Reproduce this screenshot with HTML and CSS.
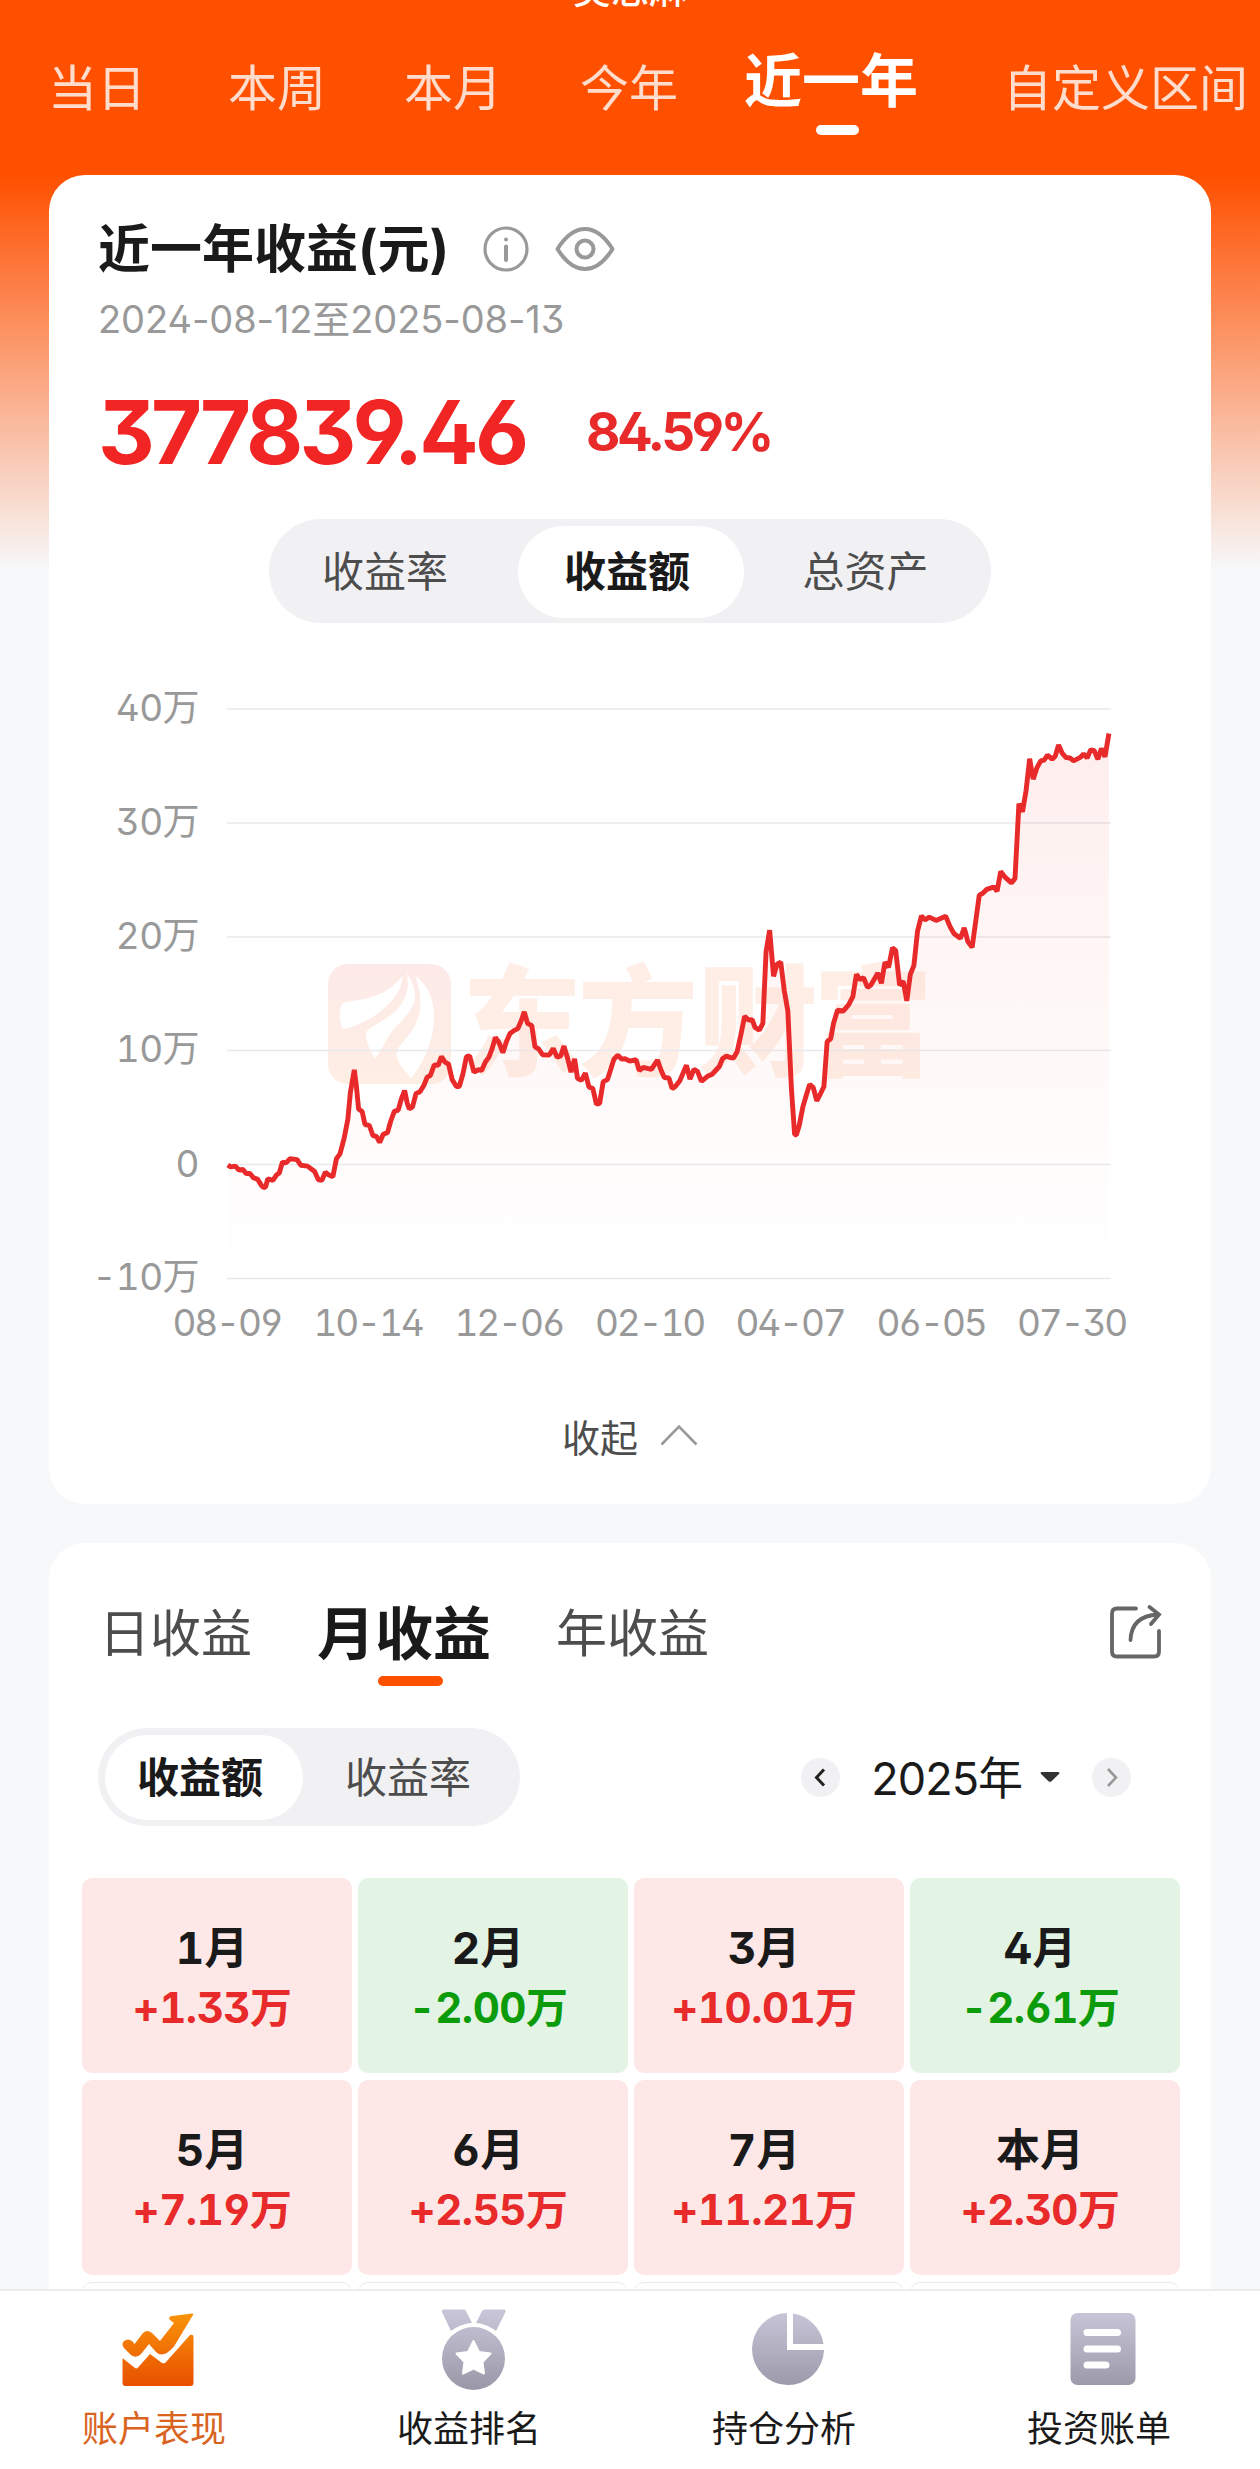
FILE: index.html
```html
<!DOCTYPE html>
<html lang="zh-CN">

<head>
    <meta charset="UTF-8">
    <meta name="viewport" content="width=device-width, initial-scale=1.0">
    <title>账户表现</title>
    <link rel="stylesheet" href="styles.css">
</head>

<body>

    <div class="content">
        <div class="account-name">吴思麻</div>

        <div class="range-tabs">
            <span>当日</span>
            <span>本周</span>
            <span>本月</span>
            <span>今年</span>
            <span class="active">近一年</span>
            <span>自定义区间</span>
        </div>

        <div class="card profit-card">
            <div class="card-title">
                <h1>近一年收益(元)</h1>
                <svg class="icon-info" width="46" height="46" viewBox="0 0 46 46" fill="none" stroke="#999">
                    <circle cx="23" cy="23" r="21" stroke-width="3.2"/>
                    <path d="M23 20.5V34" stroke-width="4" stroke-linecap="round"/>
                    <circle cx="23" cy="13.5" r="2" fill="#999" stroke="none"/>
                </svg>
                <svg class="icon-eye" width="60" height="46" viewBox="0 0 60 46" fill="none" stroke="#999" stroke-width="4">
                    <path d="M2.500 23C10 11 19 3 30 3S50 11 57.500 23C50 35 41 43 30 43S10 35 2.500 23Z" stroke-linejoin="round"/>
                    <circle cx="30" cy="23" r="8.500"/>
                </svg>
            </div>
            <div class="date-range">2024-08-12至2025-08-13</div>
            <div class="total">
                <span class="amount">377839.46</span>
                <span class="percent">84.59%</span>
            </div>

            <div class="segment segment-large">
                <span>收益率</span>
                <span class="active">收益额</span>
                <span>总资产</span>
            </div>

            <svg class="chart" width="1162" height="670" viewBox="49 680 1162 670">
                <defs>
                    <linearGradient id="areaFill" x1="0" y1="0" x2="0" y2="1">
                        <stop offset="0" stop-color="#f22525" stop-opacity="0.08"/>
                        <stop offset="0.6" stop-color="#f24a25" stop-opacity="0.03"/>
                        <stop offset="1" stop-color="#f22525" stop-opacity="0"/>
                    </linearGradient>
                    <linearGradient id="logoFill" x1="0" y1="0" x2="0" y2="1">
                        <stop offset="0" stop-color="#fdeae8"/>
                        <stop offset="1" stop-color="#feeee4"/>
                    </linearGradient>
                </defs>

                <!-- watermark -->
                <rect x="328" y="964" width="123" height="120" rx="20" fill="url(#logoFill)"/>
                <g transform="translate(300 930) scale(0.421 0.3333)" fill="#fff">
                    <path d="M100 222C105 208 195 222 243 138C246 190 190 272 102 298C92 270 92 240 100 222Z"/>
                    <path d="M254 130C290 200 272 235 228 290C200 330 200 350 178 386C165 358 152 322 158 305C175 275 272 250 254 130Z"/>
                    <path d="M274 138C335 190 335 330 264 445C245 420 230 395 229 370C235 325 316 290 274 138Z"/>
                </g>
                <g class="watermark">
                    <text x="522" y="1067">东</text>
                    <text x="638" y="1067">方</text>
                    <text x="758" y="1067">财</text>
                    <text x="873" y="1067">富</text>
                </g>

                <path d="M227 709H1111M227 823H1111M227 937H1111M227 1050.500H1111M227 1164.500H1111M227 1278.500H1111" stroke="#e8e9ee" stroke-width="1.6"/>

                <g transform="translate(80 660) scale(0.35714 0.40816)">
                    <path id="area" fill="url(#areaFill)"/>
                    <path id="line" fill="none" stroke="#e82a2a" stroke-width="4.900" stroke-linejoin="bevel" vector-effect="non-scaling-stroke"/>
                </g>

                <g class="axis-y">
                    <text x="199" y="721">40万</text>
                    <text x="199" y="835">30万</text>
                    <text x="199" y="949">20万</text>
                    <text x="199" y="1062">10万</text>
                    <text x="199" y="1177">0</text>
                    <text x="199" y="1290">-10万</text>
                </g>
                <g class="axis-x">
                    <text x="227" y="1336">08-09</text>
                    <text x="368" y="1336">10-14</text>
                    <text x="509" y="1336">12-06</text>
                    <text x="649.500" y="1336">02-10</text>
                    <text x="790" y="1336">04-07</text>
                    <text x="931" y="1336">06-05</text>
                    <text x="1071.500" y="1336">07-30</text>
                </g>
            </svg>

            <div class="collapse">
                <span>收起</span>
                <svg width="38" height="22" viewBox="0 0 38 22" fill="none" stroke="#999" stroke-width="2.6">
                    <path d="M1.500 20.500L19 2.500L36.500 20.500"/>
                </svg>
            </div>
        </div>

        <div class="card calendar-card">
            <div class="period-tabs">
                <span>日收益</span>
                <span class="active">月收益</span>
                <span>年收益</span>
                <svg class="icon-share" width="56" height="56" viewBox="0 0 56 56" fill="none" stroke="#666" stroke-width="3.800">
                    <path d="M28 4.500H9Q4 4.500 4 9.500V47.500Q4 52.500 9 52.500H46Q51 52.500 51 47.500V27" stroke-linecap="round"/>
                    <path d="M22.500 36C23 21 31 11.500 50 10.500M41.500 3L51 10.500L43 20" stroke-linecap="round"/>
                </svg>
            </div>

            <div class="filters">
                <div class="segment segment-small">
                    <span class="active">收益额</span>
                    <span>收益率</span>
                </div>
                <div class="year-picker">
                    <svg width="39" height="39" viewBox="0 0 39 39" fill="none">
                        <circle cx="19.500" cy="19.500" r="19.500" fill="#f1f1f4"/>
                        <path d="M23 11.500L15.500 19.500L23 27.500" stroke="#222" stroke-width="3"/>
                    </svg>
                    <span class="year">2025年</span>
                    <svg class="caret" width="20" height="10" viewBox="0 0 20 10">
                        <path d="M1.500 0H18.500Q20 0.500 19 2L11.500 9.200Q10 10.500 8.500 9.200L1 2Q0 0.500 1.500 0Z" fill="#333"/>
                    </svg>
                    <svg width="39" height="39" viewBox="0 0 39 39" fill="none">
                        <circle cx="19.500" cy="19.500" r="19.500" fill="#f1f1f4"/>
                        <path d="M16 11L24 19.500L16 28" stroke="#999" stroke-width="2.600"/>
                    </svg>
                </div>
            </div>

            <div class="months">
                <div class="month up"><b>1月</b><span>+1.33万</span></div>
                <div class="month down"><b>2月</b><span>-2.00万</span></div>
                <div class="month up"><b>3月</b><span>+10.01万</span></div>
                <div class="month down"><b>4月</b><span>-2.61万</span></div>
                <div class="month up"><b>5月</b><span>+7.19万</span></div>
                <div class="month up"><b>6月</b><span>+2.55万</span></div>
                <div class="month up"><b>7月</b><span>+11.21万</span></div>
                <div class="month up"><b>本月</b><span>+2.30万</span></div>
                <div class="month empty"></div>
                <div class="month empty"></div>
                <div class="month empty"></div>
                <div class="month empty"></div>
            </div>
        </div>
    </div>

    <div class="bottom-nav">
        <div class="nav-item active">
            <svg width="84" height="90" viewBox="0 0 84 90">
                <defs>
                    <linearGradient id="orange" gradientUnits="userSpaceOnUse" x1="0" y1="10" x2="0" y2="86">
                        <stop offset="0" stop-color="#fa9608"/>
                        <stop offset="1" stop-color="#e84e00"/>
                    </linearGradient>
                    <linearGradient id="gray" gradientUnits="userSpaceOnUse" x1="0" y1="6" x2="0" y2="88">
                        <stop offset="0" stop-color="#cac8da"/>
                        <stop offset="1" stop-color="#9a98a8"/>
                    </linearGradient>
                </defs>
                <g fill="url(#orange)">
                    <path d="M76 12.500Q78 12 77 14L58 45.500Q47 58 40 51L33 43L25 53Q20 58 15 54L8 47Q5 43 8 40Q12 37 16 40L18.500 43L27 32Q31 28 36 32L44 40L58 22L54 19Q51.500 15.500 56 15Z"/>
                    <path d="M7 57.500L19 67Q20.500 68 22 66.500L34 53L46 62Q48.500 63 50 61L74 34Q77.500 33 77.500 36V82Q77.500 85 74.500 85H9.500Q6.500 85 6.500 82V58.500Q6.500 57.500 7 57.500Z"/>
                </g>
            </svg>
            <span>账户表现</span>
        </div>
        <div class="nav-item">
            <svg width="84" height="90" viewBox="0 0 84 90">
                <g fill="url(#gray)">
                    <path d="M12 8.500H33Q34.500 8.500 35 10L41 22Q30 23.500 20 30L11 11Q10.500 8.500 12 8.500Z"/>
                    <path d="M73.500 8.500H53.500Q52 8.500 51 10L45 22Q56 23.500 65 30L74.500 11Q75 8.500 73.500 8.500Z"/>
                </g>
                <circle cx="42.500" cy="57.500" r="35.500" fill="#fff"/>
                <circle cx="42.500" cy="57.500" r="31.500" fill="url(#gray)"/>
                <path d="M42.500 40L48 51L59.500 52.500L51.500 61L53 72.500L42.500 67.500L32 72.500L33.500 61L25.500 52.500L37 51Z" fill="#fff" stroke="#fff" stroke-width="2" stroke-linejoin="round"/>
            </svg>
            <span>收益排名</span>
        </div>
        <div class="nav-item">
            <svg width="84" height="90" viewBox="0 0 84 90">
                <g fill="url(#gray)">
                    <path d="M41 12V49H78A36 36 0 1 1 41 12Z"/>
                    <path d="M47 12.500A36 36 0 0 1 77.500 43H47Z"/>
                </g>
            </svg>
            <span>持仓分析</span>
        </div>
        <div class="nav-item">
            <svg width="84" height="90" viewBox="0 0 84 90">
                <rect x="9.500" y="12" width="65" height="72" rx="7" fill="url(#gray)"/>
                <path d="M26 31.500H56.500M26 48H56.500M26 64H45" stroke="#fff" stroke-width="7" stroke-linecap="round"/>
            </svg>
            <span>投资账单</span>
        </div>
    </div>

    <script>
        // profit curve, x / y pairs in plot units
        const points = [
            414,1237, 422,1242, 435,1240, 445,1250, 456,1248, 465,1258, 476,1258, 486,1269, 497,1272, 508,1287,
            514,1293, 520,1290, 526,1271, 540,1275, 550,1262, 558,1257, 567,1230, 577,1232, 588,1222, 608,1224,
            618,1238, 637,1240, 657,1253, 667,1273, 677,1275, 687,1255, 697,1262, 708,1266, 718,1222, 728,1210,
            740,1170, 750,1125, 757,1060, 768,1004, 774,1045, 780,1100, 790,1106, 798,1138, 810,1140, 820,1165,
            830,1167, 839,1182, 849,1162, 861,1158, 870,1130, 880,1106, 891,1103, 900,1075, 909,1055, 916,1085,
            922,1100, 931,1095, 941,1062, 952,1058, 963,1042, 972,1022, 981,1018, 992,992, 1003,993, 1012,972,
            1022,985, 1032,990, 1042,1028, 1054,1045, 1062,1045, 1072,1015, 1082,972, 1091,970, 1103,1010, 1115,1004,
            1125,1005, 1135,985, 1145,973, 1154,952, 1163,925, 1173,937, 1184,962, 1194,935, 1204,915, 1215,908,
            1226,903, 1235,885, 1244,862, 1253,890, 1265,896, 1274,948, 1284,953, 1295,967, 1314,968, 1325,952,
            1336,973, 1346,970, 1355,946, 1365,975, 1375,1010, 1385,977, 1393,1025, 1404,1030, 1415,1012, 1425,1046,
            1436,1050, 1446,1088, 1455,1086, 1465,1033, 1477,1028, 1487,1000, 1495,978, 1506,968, 1517,978, 1527,977,
            1539,983, 1557,979, 1566,1006, 1577,998, 1600,1003, 1617,980, 1627,1005, 1636,1023, 1649,1024, 1658,1050,
            1667,1045, 1680,1030, 1698,993, 1708,1027, 1719,1003, 1729,1008, 1740,1032, 1757,1020, 1770,1015, 1790,996,
            1799,977, 1810,970, 1820,974, 1830,975, 1840,960, 1850,920, 1861,873, 1872,882, 1882,881, 1890,900,
            1902,907, 1912,890, 1921,715, 1931,662, 1942,775, 1952,745, 1962,740, 1972,810, 1982,860, 1992,1050,
            2001,1163, 2006,1163, 2014,1140, 2024,1095, 2034,1065, 2043,1040, 2053,1047, 2063,1080, 2072,1065, 2083,1045,
            2092,935, 2102,928, 2110,890, 2121,858, 2137,860, 2152,845, 2164,825, 2174,770, 2184,783, 2194,778,
            2205,802, 2214,797, 2224,782, 2234,767, 2244,792, 2254,740, 2264,753, 2275,705, 2284,712, 2295,797,
            2305,787, 2315,835, 2325,770, 2335,748, 2345,665, 2356,627, 2366,637, 2378,630, 2397,638, 2424,628,
            2437,655, 2447,670, 2465,682, 2476,656, 2486,690, 2498,704, 2508,640, 2518,576, 2527,572, 2539,562,
            2558,556, 2568,566, 2578,518, 2590,532, 2608,546, 2618,535, 2629,352, 2639,372, 2649,320, 2659,242,
            2669,292, 2679,265, 2690,247, 2700,245, 2709,233, 2722,243, 2731,235, 2740,208, 2750,228, 2761,239,
            2772,240, 2782,247, 2802,238, 2810,230, 2820,240, 2830,220, 2840,222, 2850,243, 2860,217, 2870,237,
            2881,180
        ];

        const path = "M" + points.join(" ");
        document.getElementById("line").setAttribute("d", path);
        document.getElementById("area").setAttribute("d", path + " V1514 H414 Z");
    </script>
</body>

</html>
```
FILE: styles.css
```css
* {
    box-sizing: border-box;
}

body {
    margin: 0;
    width: 1260px;
    height: 2469px;
    overflow: hidden;
    display: flex;
    flex-direction: column;
    background-color: #f7f8fa;
    color: #1a1a1a;
    font-family: Inter, "Noto Sans CJK SC", sans-serif;
    font-feature-settings: "ss01";
}

svg {
    display: block;
    flex-shrink: 0;
}

.content {
    height: 2289px;
    overflow: hidden;
    background: linear-gradient(#ff5000 0, #ff5000 175px, #f7f8fa 570px);
}

.account-name {
    height: 34px;
    margin-top: -28px;
    line-height: 34px;
    font-size: 38px;
    font-weight: 500;
    text-align: center;
    color: #fff;
}

.range-tabs {
    height: 169px;
    padding: 51px 0 0 48px;
    display: flex;
    gap: 78px;
    line-height: 64px;
    font-size: 49px;
    white-space: nowrap;
    color: #ffdccc;
}

.range-tabs span:first-child {
    margin-right: 4px;
}

.range-tabs .active {
    margin: -8px 7px 0 -12px;
    font-size: 58px;
    font-weight: 700;
    color: #fff;
}

.range-tabs .active::after,
.period-tabs .active::after {
    content: "";
    display: block;
    width: 43px;
    height: 10px;
    margin: 12px auto 0;
    border-radius: 5px;
    background-color: #fff;
    transform: translateX(6px);
}

.card {
    width: 1162px;
    margin: 0 auto;
    border-radius: 36px;
    background-color: #fff;
}

.profit-card {
    height: 1329px;
    padding-top: 44px;
}

.card-title {
    display: flex;
    align-items: center;
    height: 60px;
    padding-left: 49px;
}

h1 {
    margin: 2px 0 0;
    font-size: 52px;
    font-weight: 700;
    line-height: 60px;
}

.icon-info {
    margin-left: 34px;
}

.icon-eye {
    margin-left: 26px;
}

.date-range {
    margin: 14px 0 0 49px;
    height: 52px;
    line-height: 52px;
    font-size: 38px;
    letter-spacing: -0.1px;
    color: #999;
}

.total {
    display: flex;
    align-items: center;
    height: 100px;
    margin: 37px 0 0 49px;
    font-weight: 700;
    color: #f22525;
}

.amount {
    font-size: 88px;
    letter-spacing: -3.900px;
}

.percent {
    margin-left: 61px;
    font-size: 53px;
    letter-spacing: -3.600px;
    color: #e82a2a;
}

.segment {
    display: grid;
    padding: 7px;
    border-radius: 52px;
    background-color: #f1f1f4;
    font-size: 42px;
    text-align: center;
    color: #4d4d4d;
}

.segment .active {
    padding-right: 8px;
    border-radius: 46px;
    background-color: #fff;
    font-weight: 700;
    color: #1a1a1a;
}

.segment-large {
    width: 722px;
    height: 104px;
    margin: 37px auto 0;
    grid-template-columns: 218px 226px 195px;
    column-gap: 24px;
    line-height: 92px;
}

.chart {
    margin-top: 57px;
    font-feature-settings: "ss01", "tnum";
}

.watermark {
    font-size: 120px;
    font-weight: 800;
    fill: #feeee6;
    text-anchor: middle;
}

.axis-y {
    font-size: 37px;
    letter-spacing: -0.6px;
    fill: #999;
    text-anchor: end;
}

.axis-x {
    font-size: 37px;
    letter-spacing: -2.200px;
    fill: #999;
    text-anchor: middle;
}

.collapse {
    display: flex;
    justify-content: center;
    align-items: center;
    gap: 22px;
    height: 60px;
    margin-top: 55px;
    font-size: 38px;
    color: #4d4d4d;
}

.calendar-card {
    height: 900px;
    margin-top: 39px;
    padding: 55px 31px 0 33px;
}

.period-tabs {
    display: flex;
    gap: 65px;
    height: 130px;
    padding-left: 17px;
    line-height: 72px;
    font-size: 51px;
    color: #4d4d4d;
}

.period-tabs .active {
    font-size: 58px;
    font-weight: 700;
    color: #1a1a1a;
}

.period-tabs .active::after {
    width: 65px;
    margin-top: 6px;
    background-color: #ff5000;
}

.icon-share {
    margin: 6px 16px 0 auto;
}

.filters {
    display: flex;
    justify-content: space-between;
    align-items: center;
    height: 98px;
    padding: 0 49px 0 16px;
}

.segment-small {
    width: 422px;
    height: 98px;
    grid-template-columns: 198px 210px;
    line-height: 85px;
}

.year-picker {
    display: flex;
    align-items: center;
}

.year {
    margin: -3px 0 0 31px;
    font-size: 45px;
    letter-spacing: -1px;
}

.caret {
    margin: 0 32px 0 18px;
}

.months {
    display: grid;
    grid-template-columns: repeat(4, 270px);
    grid-auto-rows: 195px;
    gap: 7px 6px;
    margin-top: 52px;
    font-feature-settings: "ss01", "tnum";
}

.month {
    padding: 40px 10px 0 0;
    border-radius: 10px;
    text-align: center;
}

.month b,
.month span {
    display: block;
    line-height: 60px;
    font-size: 44px;
    font-weight: 700;
}

.month span {
    font-size: 42px;
    letter-spacing: -0.5px;
}

.up {
    background-color: #fde8e7;
}

.up span {
    color: #e82a2a;
}

.down {
    background-color: #e3f4e4;
}

.down span {
    color: #0b9b0b;
}

.empty {
    border: 1px solid #ebebeb;
}

.bottom-nav {
    display: flex;
    height: 180px;
    border-top: 2px solid #ececee;
    background-color: #fff;
}

.nav-item {
    flex: 1;
    display: flex;
    flex-direction: column;
    align-items: center;
    padding-top: 10px;
    font-size: 36px;
}

.nav-item span {
    margin: 13px 7px 0 0;
    line-height: 50px;
}

.nav-item.active {
    color: #d9641f;
}
```
